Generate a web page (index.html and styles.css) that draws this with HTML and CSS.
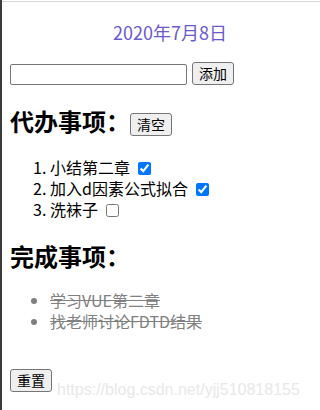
FILE: index.html
```html
<!DOCTYPE html>
<html lang="zh">
<head>
<meta charset="utf-8">
<title>待办</title>
<link rel="stylesheet" href="styles.css">
</head>
<body>
<div class="frame">
  <div class="page">
    <div class="date">2020年7月8日</div>
    <div class="add-row">
      <input class="task-input" type="text">
      <button class="btn">添加</button>
    </div>
    <div class="head-row">
      <h2 class="title">代办事项：</h2>
      <button class="btn">清空</button>
    </div>
    <ol class="todo">
      <li>小结第二章 <input type="checkbox" class="chk" checked></li>
      <li>加入d因素公式拟合 <input type="checkbox" class="chk" checked></li>
      <li>洗袜子 <input type="checkbox" class="chk"></li>
    </ol>
    <h2 class="title done-title">完成事项：</h2>
    <ul class="done">
      <li>学习VUE第二章</li>
      <li>找老师讨论FDTD结果</li>
    </ul>
    <button class="btn reset">重置</button>
  </div>
  <div class="watermark">https://blog.csdn.net/yjj510818155</div>
</div>
</body>
</html>
```

FILE: styles.css
```css
html, body {
  margin: 0;
  padding: 0;
  background: #fff;
}
body {
  font-family: "Noto Sans CJK SC", "Liberation Sans", sans-serif;
  font-size: 16px;
  color: #000;
}
.frame {
  position: relative;
  height: 410px;
  border-left: 2px solid #3c3c3c;
  box-sizing: border-box;
  overflow: hidden;
}
.page {
  margin-top: 1px;
  border-top: 1px solid #d9d9d9;
  padding: 0 8px;
}
.date {
  margin-top: 18px;
  padding-left: 103px;
  line-height: 25px;
  font-size: 18px;
  color: #6a5acd;
}
.add-row {
  display: flex;
  align-items: flex-end;
  gap: 5px;
  margin-top: 17px;
  height: 23px;
}
.task-input {
  box-sizing: border-box;
  width: 177px;
  height: 21px;
  margin: 0;
  border: 1px solid #767676;
  border-radius: 2px;
  padding: 1px 2px;
  font: inherit;
}
.btn {
  margin: 0;
  padding: 1px 6px;
  border: 1px solid #767676;
  border-radius: 3px;
  background: #efefef;
  font-family: "Noto Sans CJK SC", sans-serif;
  font-size: 14px;
  line-height: 19px;
  height: 23px;
  color: #000;
}
.head-row {
  display: flex;
  align-items: flex-end;
  margin-top: 20px;
}
.head-row .btn {
  margin-bottom: 1px;
}
.title {
  margin: 0;
  font-size: 24px;
  font-weight: bold;
  line-height: 32px;
}
.todo {
  margin: 20px 0 0;
  padding-left: 40px;
  line-height: 21px;
}
.chk {
  margin: 0 3px 0 4px;
  width: 13px;
  height: 13px;
  vertical-align: -1px;
}
.done-title {
  margin-top: 20px;
}
.done {
  margin: 18px 0 0;
  padding-left: 40px;
  line-height: 21px;
  color: #808080;
  text-decoration: line-through;
}
.reset {
  display: block;
  margin-top: 37px;
}
.watermark {
  position: absolute;
  left: 55px;
  top: 380px;
  font-family: "Liberation Sans", sans-serif;
  font-size: 16px;
  line-height: 20px;
  color: #e8e8e8;
  white-space: nowrap;
}
```
